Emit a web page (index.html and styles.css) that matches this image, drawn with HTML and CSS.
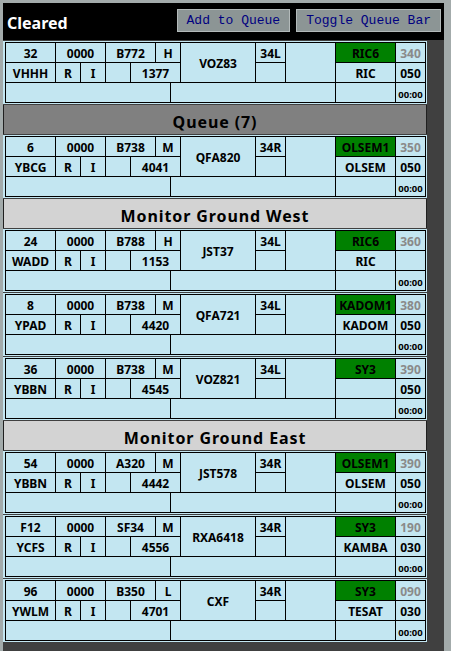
FILE: index.html
```html
<!DOCTYPE html>
<html>
<head>
<meta charset="utf-8">
<link rel="stylesheet" href="styles.css">
</head>
<body>
<div class="app">
  <div class="topbar">
    <div class="title">Cleared</div>
    <div class="buttons">
      <button class="btn">Add to Queue</button>
      <button class="btn">Toggle Queue Bar</button>
    </div>
  </div>
  <div class="list">
    <div class="strip"><div class="grid">
      <div class="c a1">32</div><div class="c a2">0000</div><div class="c a3">B772</div><div class="c a4">H</div>
      <div class="c cs">VOZ83</div><div class="c rwy">34L</div><div class="c rwy2"></div><div class="c blk"></div>
      <div class="c sid">RIC6</div><div class="c alt">340</div>
      <div class="c b1">VHHH</div><div class="c b2">R</div><div class="c b3">I</div><div class="c b4"></div><div class="c b5">1377</div>
      <div class="c sid2">RIC</div><div class="c alt2">050</div>
      <div class="c x1"></div><div class="c x2"></div><div class="c x3"></div><div class="c time">00:00</div>
    </div></div>

    <div class="bay bay-dark">Queue (7)</div>

    <div class="strip"><div class="grid">
      <div class="c a1">6</div><div class="c a2">0000</div><div class="c a3">B738</div><div class="c a4">M</div>
      <div class="c cs">QFA820</div><div class="c rwy">34R</div><div class="c rwy2"></div><div class="c blk"></div>
      <div class="c sid">OLSEM1</div><div class="c alt">350</div>
      <div class="c b1">YBCG</div><div class="c b2">R</div><div class="c b3">I</div><div class="c b4"></div><div class="c b5">4041</div>
      <div class="c sid2">OLSEM</div><div class="c alt2">050</div>
      <div class="c x1"></div><div class="c x2"></div><div class="c x3"></div><div class="c time">00:00</div>
    </div></div>

    <div class="bay bay-light">Monitor Ground West</div>

    <div class="strip"><div class="grid">
      <div class="c a1">24</div><div class="c a2">0000</div><div class="c a3">B788</div><div class="c a4">H</div>
      <div class="c cs">JST37</div><div class="c rwy">34L</div><div class="c rwy2"></div><div class="c blk"></div>
      <div class="c sid">RIC6</div><div class="c alt">360</div>
      <div class="c b1">WADD</div><div class="c b2">R</div><div class="c b3">I</div><div class="c b4"></div><div class="c b5">1153</div>
      <div class="c sid2">RIC</div><div class="c alt2"></div>
      <div class="c x1"></div><div class="c x2"></div><div class="c x3"></div><div class="c time">00:00</div>
    </div></div>

    <div class="strip"><div class="grid">
      <div class="c a1">8</div><div class="c a2">0000</div><div class="c a3">B738</div><div class="c a4">M</div>
      <div class="c cs">QFA721</div><div class="c rwy">34L</div><div class="c rwy2"></div><div class="c blk"></div>
      <div class="c sid">KADOM1</div><div class="c alt">380</div>
      <div class="c b1">YPAD</div><div class="c b2">R</div><div class="c b3">I</div><div class="c b4"></div><div class="c b5">4420</div>
      <div class="c sid2">KADOM</div><div class="c alt2">050</div>
      <div class="c x1"></div><div class="c x2"></div><div class="c x3"></div><div class="c time">00:00</div>
    </div></div>

    <div class="strip"><div class="grid">
      <div class="c a1">36</div><div class="c a2">0000</div><div class="c a3">B738</div><div class="c a4">M</div>
      <div class="c cs">VOZ821</div><div class="c rwy">34L</div><div class="c rwy2"></div><div class="c blk"></div>
      <div class="c sid">SY3</div><div class="c alt">390</div>
      <div class="c b1">YBBN</div><div class="c b2">R</div><div class="c b3">I</div><div class="c b4"></div><div class="c b5">4545</div>
      <div class="c sid2"></div><div class="c alt2">050</div>
      <div class="c x1"></div><div class="c x2"></div><div class="c x3"></div><div class="c time">00:00</div>
    </div></div>

    <div class="bay bay-light">Monitor Ground East</div>

    <div class="strip"><div class="grid">
      <div class="c a1">54</div><div class="c a2">0000</div><div class="c a3">A320</div><div class="c a4">M</div>
      <div class="c cs">JST578</div><div class="c rwy">34R</div><div class="c rwy2"></div><div class="c blk"></div>
      <div class="c sid">OLSEM1</div><div class="c alt">390</div>
      <div class="c b1">YBBN</div><div class="c b2">R</div><div class="c b3">I</div><div class="c b4"></div><div class="c b5">4442</div>
      <div class="c sid2">OLSEM</div><div class="c alt2">050</div>
      <div class="c x1"></div><div class="c x2"></div><div class="c x3"></div><div class="c time">00:00</div>
    </div></div>

    <div class="strip"><div class="grid">
      <div class="c a1">F12</div><div class="c a2">0000</div><div class="c a3">SF34</div><div class="c a4">M</div>
      <div class="c cs">RXA6418</div><div class="c rwy">34R</div><div class="c rwy2"></div><div class="c blk"></div>
      <div class="c sid">SY3</div><div class="c alt">190</div>
      <div class="c b1">YCFS</div><div class="c b2">R</div><div class="c b3">I</div><div class="c b4"></div><div class="c b5">4556</div>
      <div class="c sid2">KAMBA</div><div class="c alt2">030</div>
      <div class="c x1"></div><div class="c x2"></div><div class="c x3"></div><div class="c time">00:00</div>
    </div></div>

    <div class="strip"><div class="grid">
      <div class="c a1">96</div><div class="c a2">0000</div><div class="c a3">B350</div><div class="c a4">L</div>
      <div class="c cs">CXF</div><div class="c rwy">34R</div><div class="c rwy2"></div><div class="c blk"></div>
      <div class="c sid">SY3</div><div class="c alt">090</div>
      <div class="c b1">YWLM</div><div class="c b2">R</div><div class="c b3">I</div><div class="c b4"></div><div class="c b5">4701</div>
      <div class="c sid2">TESAT</div><div class="c alt2">030</div>
      <div class="c x1"></div><div class="c x2"></div><div class="c x3"></div><div class="c time">00:00</div>
    </div></div>
  </div>
</div>
</body>
</html>
```
FILE: styles.css
```css
html, body {
  margin: 0;
  padding: 0;
  background: #a3abab;
  height: 100%;
  overflow: hidden;
}

.app {
  margin: 3px 0 0 3px;
  width: 441px;
  height: 648px;
  background: #404040;
  display: flex;
  flex-direction: column;
  font-family: "Noto Sans", "Liberation Sans", sans-serif;
}

.topbar {
  height: 37px;
  box-sizing: border-box;
  background: #000;
  display: flex;
  align-items: flex-start;
  justify-content: space-between;
  padding: 6px 3px 0 4px;
}

.title {
  color: #fff;
  font-weight: 700;
  font-size: 16px;
  line-height: 22px;
  margin-top: 3px;
}

.buttons {
  display: flex;
  gap: 6px;
}

.btn {
  height: 23px;
  box-sizing: border-box;
  padding: 0 9px;
  margin: 0;
  border: 1px solid #b3baba;
  background: #8c9595;
  color: #000080;
  font-family: "Liberation Mono", monospace;
  font-size: 13px;
  line-height: 21px;
}

.list {
  display: flex;
  flex-direction: column;
  gap: 1px;
  padding-top: 1px;
}

.strip {
  width: 424px;
  box-sizing: border-box;
  padding: 1px 1px 1px 2px;
  background: #c3e6f1;
}

.grid {
  display: grid;
  grid-template-columns: 49px 24px 24px 24px 24px 14px 9px 74px 29px 49px 59px 29px;
  grid-template-rows: 19px 19px 19px;
  gap: 1px;
  padding: 1px;
  background: #000;
  width: max-content;
}

.c {
  background: #c3e6f1;
  color: #000;
  font-weight: 700;
  font-size: 12px;
  display: flex;
  align-items: center;
  justify-content: center;
  padding-top: 2px;
  box-sizing: border-box;
  white-space: nowrap;
  overflow: hidden;
}

.a1 { grid-column: 1; grid-row: 1; }
.a2 { grid-column: 2 / 4; grid-row: 1; }
.a3 { grid-column: 4 / 6; grid-row: 1; }
.a4 { grid-column: 6 / 8; grid-row: 1; }
.cs { grid-column: 8; grid-row: 1 / 3; }
.rwy { grid-column: 9; grid-row: 1; }
.rwy2 { grid-column: 9; grid-row: 2; }
.blk { grid-column: 10; grid-row: 1 / 3; }
.sid { grid-column: 11; grid-row: 1; background: #008000; }
.alt { grid-column: 12; grid-row: 1; color: #8a8a8a; }
.b1 { grid-column: 1; grid-row: 2; }
.b2 { grid-column: 2; grid-row: 2; }
.b3 { grid-column: 3; grid-row: 2; }
.b4 { grid-column: 4; grid-row: 2; }
.b5 { grid-column: 5 / 8; grid-row: 2; }
.sid2 { grid-column: 11; grid-row: 2; }
.alt2 { grid-column: 12; grid-row: 2; }
.x1 { grid-column: 1 / 7; grid-row: 3; }
.x2 { grid-column: 7 / 11; grid-row: 3; }
.x3 { grid-column: 11; grid-row: 3; }
.time { grid-column: 12; grid-row: 3; font-size: 9.5px; padding-top: 4px; }

.bay {
  width: 424px;
  height: 29px;
  box-sizing: border-box;
  border-left: 1px solid #202020;
  border-right: 1px solid #202020;
  display: flex;
  align-items: center;
  justify-content: center;
  padding-top: 4px;
  font-weight: 700;
  font-size: 16px;
  letter-spacing: 0.9px;
  color: #000;
}

.bay-dark { background: #808080; }
.bay-light { background: #d3d3d3; }
```
